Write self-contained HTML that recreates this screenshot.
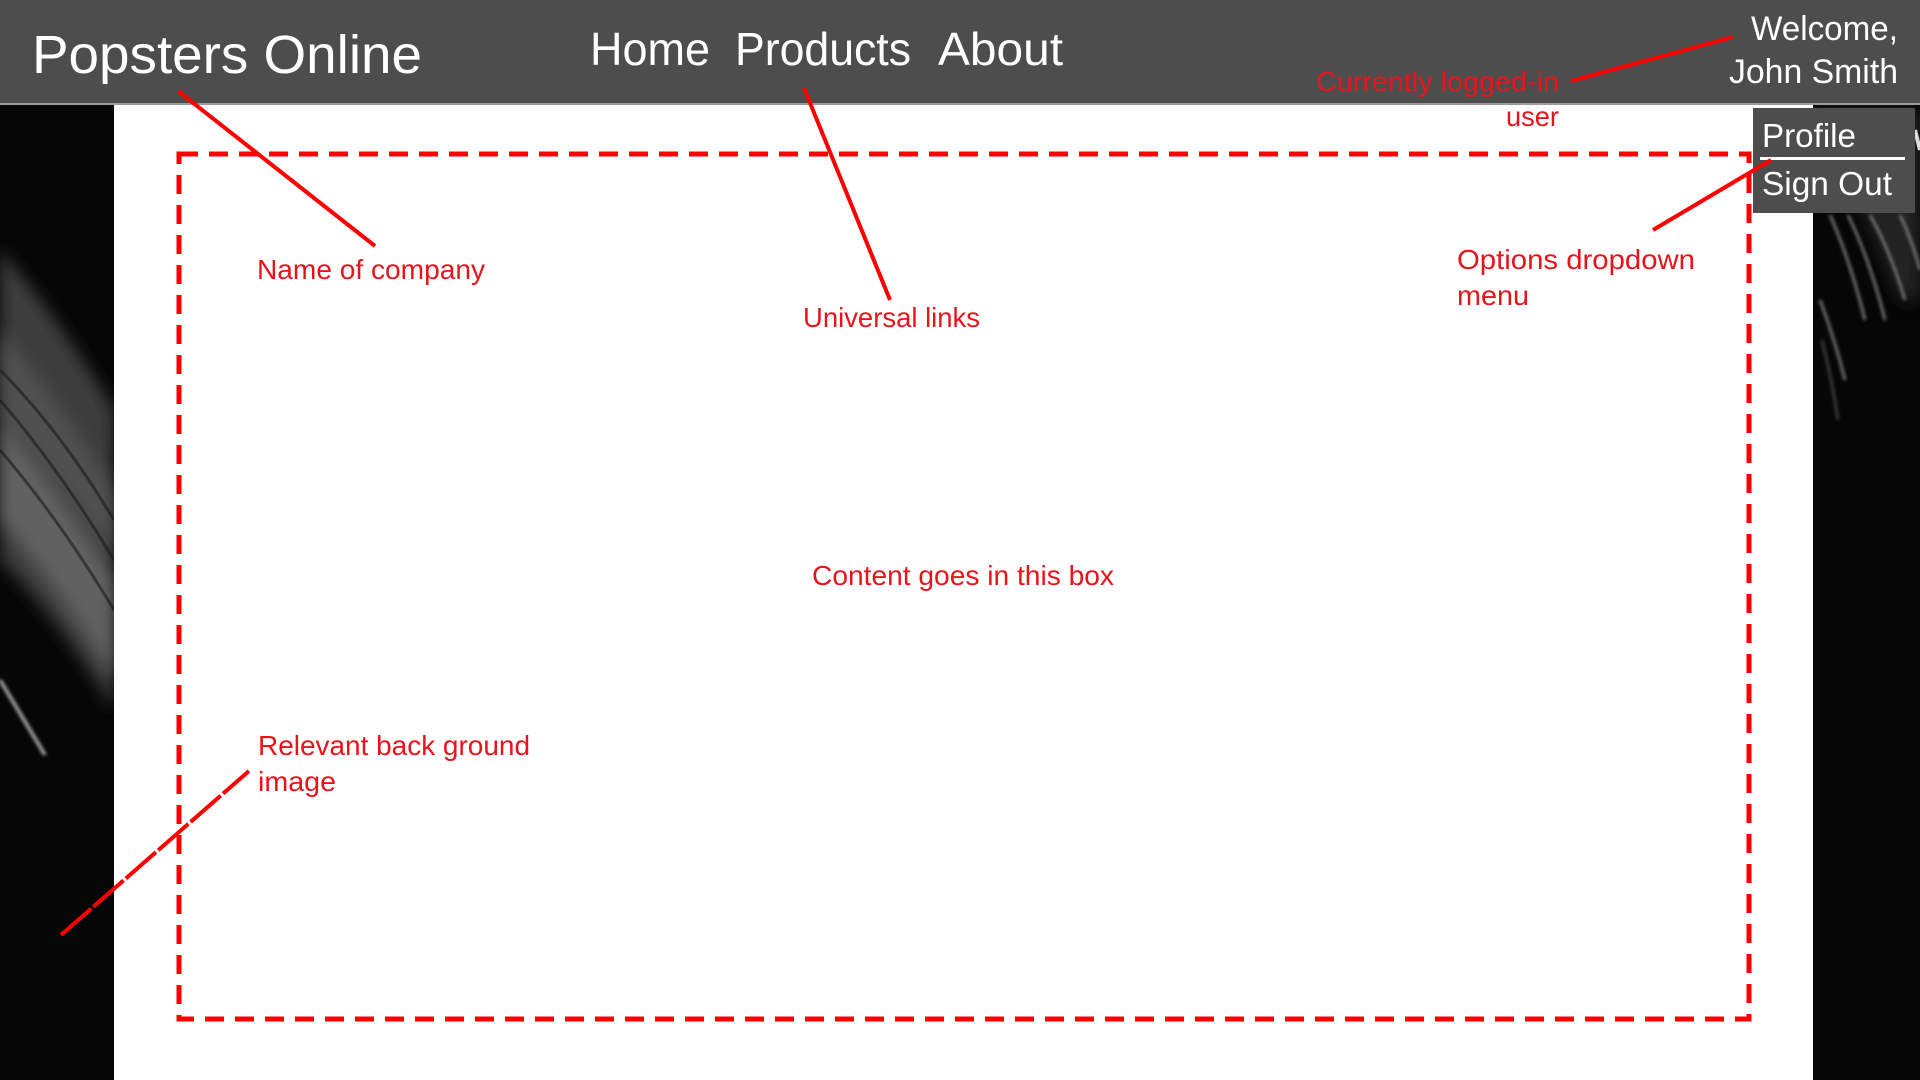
<!DOCTYPE html>
<html><head><meta charset="utf-8"><style>
html,body{margin:0;padding:0;width:1920px;height:1080px;overflow:hidden;background:#050505}
svg{display:block}
text{font-family:"Liberation Sans",sans-serif}
</style></head><body>
<svg width="1920" height="1080" viewBox="0 0 1920 1080" xmlns="http://www.w3.org/2000/svg">
<defs>
<filter id="b8" x="-50%" y="-50%" width="200%" height="200%"><feGaussianBlur stdDeviation="8"/></filter>
<filter id="b2" x="-50%" y="-50%" width="200%" height="200%"><feGaussianBlur stdDeviation="1.5"/></filter>
</defs>
<rect width="1920" height="1080" fill="#060606"/>
<!-- left streaks -->
<path d="M0 250 Q60 320 114 410 L114 710 Q60 620 0 560 Z" fill="#3c3c3c" filter="url(#b8)"/>
<path d="M0 330 Q60 400 114 490 L114 560 Q60 480 0 420 Z" fill="#555" filter="url(#b8)" opacity="0.8"/>
<path d="M0 420 Q60 490 114 580 L114 680 Q60 590 0 520 Z" fill="#6a6a6a" filter="url(#b8)" opacity="0.8"/>
<g stroke="#1a1a1a" stroke-width="3" fill="none" opacity="0.6">
<path d="M0 370 Q60 430 114 520"/><path d="M0 450 Q60 520 114 610"/><path d="M0 400 Q60 470 114 560"/>
</g>
<path d="M0 680 L45 755" stroke="#999" stroke-width="4" filter="url(#b2)"/>
<!-- right streaks -->
<path d="M1813 110 Q1860 200 1900 300 L1920 300 L1920 110Z" fill="#2a2a2a" filter="url(#b8)" opacity="0.8"/>
<g stroke="#8a8a8a" stroke-width="3" fill="none" filter="url(#b2)" opacity="0.8">
<path d="M1830 215 Q1850 260 1865 320"/>
<path d="M1848 215 Q1870 260 1885 320"/>
<path d="M1870 215 Q1890 250 1905 300"/>
<path d="M1820 300 Q1835 340 1845 380"/>
<path d="M1900 215 Q1912 240 1920 270"/>
<path d="M1822 340 Q1832 380 1838 420" opacity="0.5"/>
</g>
<path d="M1915 130 L1920 150" stroke="#ddd" stroke-width="4"/>
<!-- white panel -->
<rect x="114" y="103" width="1699" height="977" fill="#fff"/>
<!-- header -->
<rect x="0" y="0" width="1920" height="103" fill="#4d4d4d"/>
<rect x="0" y="103" width="1920" height="2" fill="#9a9a9a"/>
<text x="32" y="73" font-size="54" fill="#fff" textLength="390" lengthAdjust="spacingAndGlyphs">Popsters Online</text>
<text x="590" y="65" font-size="46" fill="#fff" textLength="120" lengthAdjust="spacingAndGlyphs">Home</text>
<text x="735" y="65" font-size="46" fill="#fff" textLength="176" lengthAdjust="spacingAndGlyphs">Products</text>
<text x="938" y="65" font-size="46" fill="#fff" textLength="125" lengthAdjust="spacingAndGlyphs">About</text>
<text x="1751" y="40" font-size="34" fill="#fff" textLength="147" lengthAdjust="spacingAndGlyphs">Welcome,</text>
<text x="1729" y="83" font-size="34" fill="#fff" textLength="169" lengthAdjust="spacingAndGlyphs">John Smith</text>
<!-- dropdown -->
<rect x="1753" y="108" width="162" height="105" fill="#4d4d4d"/>
<text x="1762" y="147" font-size="33" fill="#fff" textLength="94" lengthAdjust="spacingAndGlyphs">Profile</text>
<rect x="1760" y="157" width="145" height="3" fill="#fff"/>
<text x="1762" y="195" font-size="33" fill="#fff" textLength="130" lengthAdjust="spacingAndGlyphs">Sign Out</text>
<!-- dashed box -->
<rect x="179" y="154" width="1570" height="865" fill="none" stroke="#f00" stroke-width="5" stroke-dasharray="19 11"/>
<!-- lines -->
<g stroke="#f00" stroke-width="4" fill="none">
<line x1="178" y1="91" x2="375" y2="246"/>
<line x1="804" y1="88" x2="890" y2="300"/>
<line x1="1571" y1="81" x2="1733" y2="37"/>
<line x1="1653" y1="230" x2="1771" y2="160"/>
<line x1="61" y1="935" x2="249" y2="771" stroke-dasharray="40 3"/>
</g>
<!-- red labels -->
<g fill="#e8141c" font-size="28">
<text x="1316" y="91" textLength="243" lengthAdjust="spacingAndGlyphs">Currently logged-in</text>
<text x="1506" y="126" textLength="53" lengthAdjust="spacingAndGlyphs">user</text>
<text x="257" y="279" textLength="228" lengthAdjust="spacingAndGlyphs">Name of company</text>
<text x="803" y="327" textLength="177" lengthAdjust="spacingAndGlyphs">Universal links</text>
<text x="1457" y="269" textLength="238" lengthAdjust="spacingAndGlyphs">Options dropdown</text>
<text x="1457" y="305" textLength="72" lengthAdjust="spacingAndGlyphs">menu</text>
<text x="812" y="585" textLength="302" lengthAdjust="spacingAndGlyphs">Content goes in this box</text>
<text x="258" y="755" textLength="272" lengthAdjust="spacingAndGlyphs">Relevant back ground</text>
<text x="258" y="791" textLength="78" lengthAdjust="spacingAndGlyphs">image</text>
</g>
</svg>
</body></html>
